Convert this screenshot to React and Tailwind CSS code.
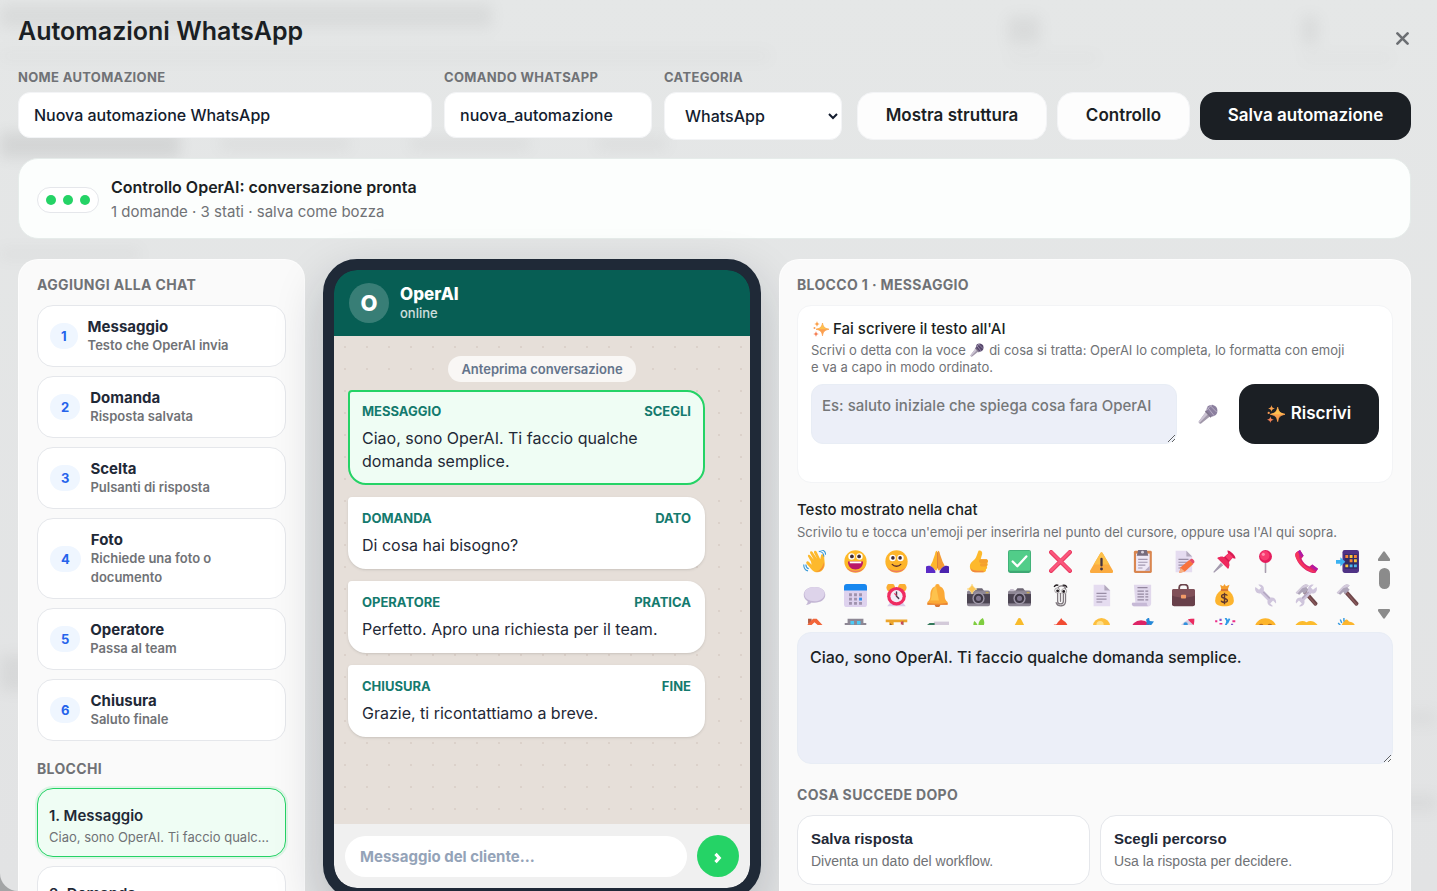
import { useState } from 'react';

const blockTypes = [
  { id: 1, title: 'Messaggio', text: 'Testo che OperAI invia' },
  { id: 2, title: 'Domanda', text: 'Risposta salvata' },
  { id: 3, title: 'Scelta', text: 'Pulsanti di risposta' },
  { id: 4, title: 'Foto', text: 'Richiede una foto o documento' },
  { id: 5, title: 'Operatore', text: 'Passa al team' },
  { id: 6, title: 'Chiusura', text: 'Saluto finale' },
];

const blocks = [
  { id: 1, type: 'Messaggio', tag: 'Scegli', text: 'Ciao, sono OperAI. Ti faccio qualche domanda semplice.' },
  { id: 2, type: 'Domanda', tag: 'Dato', text: 'Di cosa hai bisogno?' },
  { id: 3, type: 'Operatore', tag: 'Pratica', text: 'Perfetto. Apro una richiesta per il team.' },
  { id: 4, type: 'Chiusura', tag: 'Fine', text: 'Grazie, ti ricontattiamo a breve.' },
];

const nextSteps = [
  { title: 'Salva risposta', text: 'Diventa un dato del workflow.' },
  { title: 'Scegli percorso', text: 'Usa la risposta per decidere.' },
];

// Emoji drawings, all on a 32x32 grid
const sparklesArt = (
  <>
    <path d="M19 4c1.500 8 4 10.500 13 12.500-9 2-11.500 4.500-13 13-1.500-8.500-4-11-13-13C15 14.500 17.500 12 19 4z" fill="#fb9f4f" stroke="#fb9f4f" strokeWidth="1.500" strokeLinejoin="round" />
    <path d="M19 4c1.500 8 4 10.500 13 12.500H6C15 14.500 17.500 12 19 4z" fill="#fdc04f" />
    <path d="M8 0c.7 4 2 5.300 6 6-4 .7-5.300 2-6 6-.7-4-2-5.300-6-6 4-.7 5.300-2 6-6z" fill="#fba24e" />
    <path d="M6 20c.7 4 2 5.300 6 6-4 .7-5.300 2-6 6-.7-4-2-5.300-6-6 4-.7 5.300-2 6-6z" fill="#f58258" />
    <circle cx="3" cy="14" r="2" fill="#f99c55" />
  </>
);

const micArt = (head) => (
  <>
    <path d="M13 12l7 7L5 31c-2 1.500-5-1.500-3.500-3.500z" fill="#a299ab" />
    <path d="M13 12l3.500 3.500L2.500 30c-1.500-.5-2-1.500-1-2.500z" fill="#cdc5d4" />
    <path d="M14 7c0-8 18-8 17 4 0 6-5 9-10 9l-8-8z" fill={head} />
    <path d="M15 5l11 14M14 10l4-5 5-4M19 2l11 11" fill="none" stroke="#c2b8cd" strokeWidth="1.300" />
    <path d="M12 11l9 10" stroke="#80758c" strokeWidth="2.500" />
  </>
);

const pageArt = (
  <>
    <path d="M5 1h15l8 8v22H5z" fill="#e5dcf0" />
    <path d="M20 1l8 8h-8z" fill="#b3a9bd" />
    <path d="M9 13h14M9 17h14M9 21h14M9 25h8" stroke="#998da5" strokeWidth="1.600" />
  </>
);

const cameraArt = (
  <>
    <path d="M10 10l3-4h8l3 4z" fill="#6d6673" />
    <rect x="0" y="9" width="32" height="22" rx="2.500" fill="#8d8694" />
    <path d="M0 14h32v13H0z" fill="#4b4452" />
    <rect x="3" y="7" width="5" height="3" fill="#c7bfce" />
    <rect x="26" y="11" width="4" height="2" fill="#c2a657" />
    <circle cx="16" cy="20" r="8.500" fill="#9d96a6" />
    <circle cx="16" cy="20" r="6.500" fill="#3e3845" />
    <circle cx="16" cy="20" r="3.500" fill="#81778f" />
  </>
);

const wrenchArt = (
  <>
    <path d="M2 4l5 4 3-3-4-4c5-1 9 3 7.500 8L23 19c5-1.500 9 3 7.500 8l-4-4-4 4 4 4c-5 1-9-3-7.500-8L9 13C4 14.500 0 9 2 4z" fill="#cfc5dc" />
    <path d="M13 11l9 9" stroke="#b3a7c1" strokeWidth="2" />
  </>
);

const hammerArt = (
  <>
    <path d="M11 12l4-4 16 18c1.500 2-2 5.500-4 4z" fill="#6d4549" />
    <path d="M13 10l16 19" stroke="#8f5d5e" strokeWidth="1.500" />
    <path d="M1 12L10 3c3-3 7-3 9-1l-3 3 3 3-6 6-3-3-4 4z" fill="#ada4b8" />
    <path d="M1 12L10 3c3-3 7-3 9-1l-3 2-6 2-7 8z" fill="#d3cadc" />
  </>
);

const emojis = [
  {
    name: 'Saluto',
    art: (
      <>
        <path d="M10 16L6 9c-1-2 1.500-3.500 3-1.500l5 6-5-9C8 2 11 .5 12.500 3l6 9-4-8c-1-2.500 2-4 3.500-1.500L23 13l1-5c.5-3 4.500-2.500 4.500 1 0 7 2 11-.5 16-3 7-12 8-17 2L4 19c-1.500-2 1-4.500 3-2.500l4 4z" transform="translate(1 0)" fill="#fdb92c" />
        <path d="M29 17c1 9-4 14-12 13 7-1 10-5 12-13z" fill="#f2873c" />
        <path d="M22 2c4 0 7 3 7 7M24-.5c5 .5 7.500 3 7.500 7M1 20c0 5 2 8 6 9M4 20c0 3 1 5 4 6" fill="none" stroke="#3b9bd8" strokeWidth="1.600" />
      </>
    ),
  },
  {
    name: 'Sorriso aperto',
    art: (
      <>
        <circle cx="16" cy="16" r="15.500" fill="#fdb927" />
        <path d="M3 24c5 9 20 10 26 0-3 3-7 5-13 5S6 27 3 24z" fill="#ed7a62" />
        <circle cx="10.500" cy="9" r="4.500" fill="#fff" />
        <circle cx="21.500" cy="9" r="4.500" fill="#fff" />
        <circle cx="11" cy="9" r="2.600" fill="#402a32" />
        <circle cx="21" cy="9" r="2.600" fill="#402a32" />
        <path d="M5.500 16h21c0 7-4 11-10.500 11S5.500 23 5.500 16z" fill="#ba1768" />
        <path d="M8 16h16v2.500H8z" fill="#fff" />
      </>
    ),
  },
  {
    name: 'Sorriso',
    art: (
      <>
        <circle cx="16" cy="16" r="15.500" fill="#fdb52b" />
        <path d="M3 24c5 9 20 10 26 0-3 3-7 5-13 5S6 27 3 24z" fill="#ed7a62" />
        <circle cx="10.500" cy="11" r="4.500" fill="#fff" />
        <circle cx="21.500" cy="11" r="4.500" fill="#fff" />
        <circle cx="11" cy="11" r="2.500" fill="#402a32" />
        <circle cx="21" cy="11" r="2.500" fill="#402a32" />
        <path d="M10 20c3 3.500 9 3.500 12 0" fill="none" stroke="#5b2f2c" strokeWidth="1.800" strokeLinecap="round" />
      </>
    ),
  },
  {
    name: 'Grazie',
    art: (
      <>
        <path d="M15.500 1c-2 0-2.500 2-3 5L9 16l-3 6 8 7 2-3z" fill="#fdb52c" />
        <path d="M16.500 1c2 0 2.500 2 3 5L23 16l3 6-8 7-2-3z" fill="#f49b35" />
        <path d="M16 3v22" stroke="#d9772f" strokeWidth="1.200" />
        <path d="M0 23c5-3 11 1 13 7v2H0z" fill="#5b2bc6" />
        <path d="M32 23c-5-3-11 1-13 7v2h13z" fill="#4b23ae" />
      </>
    ),
  },
  {
    name: 'Pollice in su',
    art: (
      <>
        <path d="M16 1c3-1 6 1 5 5l-2 7h7c3 0 4 3 2 5 1.500 1.500 1 3.500-.5 4.500 1 2 .5 3.500-1.200 4.200.7 2-.6 4.300-3.300 4.300H12c-5 0-8-3-8-8 0-7 7-8 9-14z" fill="#fdb92c" />
        <path d="M19 13h7c3 0 4 3 2 5h-9c-3 0-3-5 0-5zM20 18.500h7.500c1 2 .5 3.500-1 4.500H20c-2.500 0-2.500-4.500 0-4.500z" fill="#f5a02f" />
        <path d="M5 25c3 4 9 4 18 4v2H12c-4 0-6-2-7-6z" fill="#f08740" />
      </>
    ),
  },
  {
    name: 'Fatto',
    art: (
      <>
        <rect x="0" y="0" width="32" height="32" rx="3" fill="#3da873" />
        <rect x="1" y="1" width="30" height="28" rx="2" fill="#51cd89" />
        <path d="M6.500 16l6.500 6.500L25.500 9" fill="none" stroke="#fff" strokeWidth="3.200" strokeLinecap="round" strokeLinejoin="round" />
      </>
    ),
  },
  {
    name: 'Errore',
    art: (
      <>
        <path d="M3 3l26 26M29 3L3 29" stroke="#e8395f" strokeWidth="6" strokeLinecap="round" />
        <path d="M3 2.500l26 26M29 2.500L3 28.500" stroke="#fb567c" strokeWidth="3.600" strokeLinecap="round" />
      </>
    ),
  },
  {
    name: 'Attenzione',
    art: (
      <>
        <path d="M14.500 4c.7-1.300 2.300-1.300 3 0L32 29c.5 1.500 0 3-1.500 3h-29C0 32-.5 30.500 0 29z" fill="#fbab40" />
        <path d="M14.500 4c.7-1.300 2.300-1.300 3 0L27 20H5z" fill="#fdc04a" />
        <path d="M16 12.500v9" stroke="#443341" strokeWidth="3.200" strokeLinecap="round" />
        <circle cx="16" cy="26.500" r="2" fill="#443341" />
      </>
    ),
  },
  {
    name: 'Appunti',
    art: (
      <>
        <rect x="4" y="1" width="25" height="31" rx="2" fill="#d98650" />
        <path d="M7 5h19v24H7z" fill="#efe8f6" />
        <path d="M26 22l-7 7h7z" fill="#b9adc6" />
        <path d="M10 0h12l2 8H8z" fill="#776b7d" />
        <circle cx="16" cy="3" r="2" fill="#d9d1de" />
        <path d="M10 13h13M10 17h13M10 21h10M10 25h6" stroke="#a397b0" strokeWidth="1.500" />
      </>
    ),
  },
  {
    name: 'Nota',
    art: (
      <>
        {pageArt}
        <path d="M12 24l12-10 6 5-12 11-8 2z" fill="#f8733d" />
        <path d="M24 14l3-2c2 0 5 3 4 5l-2 2z" fill="#e54c6b" />
        <path d="M10 32l2-7 6 5z" fill="#f6b185" />
      </>
    ),
  },
  {
    name: 'Puntina',
    art: (
      <>
        <path d="M1 31l10-12 2 2z" stroke="#a49aae" strokeWidth="1.500" fill="#a49aae" />
        <path d="M6 11c4-2 7-2 9-1l6-5-1-4c2-2 13 8 11 11l-4-1-5 6c1 3 1 6-1 9z" fill="#d91a52" />
        <path d="M17 9l5-5 6 6-5 5z" fill="#f8396b" />
        <path d="M6 11c4-2 7-2 9-1l7 7c1 3 1 6-1 9z" fill="#ee295e" />
      </>
    ),
  },
  {
    name: 'Posizione',
    art: (
      <>
        <path d="M16 16v15" stroke="#a79dae" strokeWidth="2.200" strokeLinecap="round" />
        <circle cx="16" cy="9" r="9" fill="#e41c5c" />
        <circle cx="15" cy="8" r="6.500" fill="#f83b70" />
        <circle cx="13" cy="6" r="2.200" fill="#ff8dac" />
      </>
    ),
  },
  {
    name: 'Telefono',
    art: (
      <>
        <path d="M2 3l5-3 5 8-3 4c2 5 6 9 11 11l4-3 8 6-3 5c-2 2-6 1-10-1C11 26 4 19 1 10 0 7 0 5 2 3z" fill="#d71f72" />
        <path d="M2 3l3-2 1 10c3 7 8 12 15 15l8 5c-2 1-6 0-10-2C11 25 4 18 1 10 0 7 0 5 2 3z" fill="#f5365c" />
        <path d="M7 0l5 8-3 2-5-8zM24 20l8 6-2 3-8-6z" fill="#b119a5" />
      </>
    ),
  },
  {
    name: 'Chiamata',
    art: (
      <>
        <rect x="9" y="0" width="23" height="32" rx="3" fill="#4f3285" />
        <path d="M12 6h18v20H12z" fill="#302b63" />
        <path d="M13 7h4v4h-4zM19 13h4v4h-4zM25 7h4v4h-4z" fill="#fb8437" />
        <path d="M19 7h4v4h-4zM25 13h4v4h-4zM13 20h4v4h-4z" fill="#fcc63d" />
        <path d="M19 20h4v4h-4zM25 20h4v4h-4z" fill="#4eb5ee" />
        <path d="M0 14h6v-4l7 6.500L6 23v-4H0z" fill="#3bb2f2" />
      </>
    ),
  },
  {
    name: 'Fumetto',
    art: (
      <>
        <path d="M16 4c9 0 15 4.500 15 11s-6 11-15 11c-1 0-3 0-4-.3C10 28 7 29 4 29c2-1.500 2.500-3 2.500-5C3 22 1 19 1 15 1 8.500 7 4 16 4z" fill="#c3b6d4" />
        <path d="M16 4c9 0 14 4 14 9.500S24 24 16 24 2 20 2 14 7 4 16 4z" fill="#ddd3ea" />
      </>
    ),
  },
  {
    name: 'Calendario',
    art: (
      <>
        <rect x="0" y="0" width="32" height="32" rx="4" fill="#ded2ee" />
        <path d="M4 0h24c2.500 0 4 1.500 4 4v5H0V4c0-2.500 1.500-4 4-4z" fill="#1787ef" />
        <path d="M7 13h4v4H7zM14 13h4v4h-4zM21 13h4v4h-4zM7 19h4v4H7zM14 19h4v4h-4zM7 25h4v4H7zM14 25h4v4h-4zM21 25h4v4h-4z" fill="#9f92ad" />
        <path d="M21 19h4v4h-4z" fill="#2e8fed" />
      </>
    ),
  },
  {
    name: 'Sveglia',
    art: (
      <>
        <path d="M3 31l5-6h16l5 6z" fill="#dacce8" />
        <circle cx="8" cy="5" r="6" fill="#fbad32" />
        <circle cx="24" cy="5" r="6" fill="#fbad32" />
        <circle cx="16" cy="17" r="13" fill="#ef2b61" />
        <circle cx="16" cy="17" r="8.500" fill="#f3ecf7" />
        <path d="M16 11v6l3 3" fill="none" stroke="#4b3b50" strokeWidth="2" strokeLinecap="round" />
        <path d="M16 16l-3-3" stroke="#ef2b61" strokeWidth="1.500" />
      </>
    ),
  },
  {
    name: 'Campana',
    art: (
      <>
        <circle cx="16" cy="28" r="4" fill="#d77534" />
        <path d="M16 0c2 0 3 1 3 3 6 2 7 8 7 14 0 4 2 6 4 8v4H2v-4c2-2 4-4 4-8 0-6 1-12 7-14 0-2 1-3 3-3z" fill="#fba936" />
        <path d="M14 3c-7 3-5 15-8 20h12z" fill="#fdc24d" />
        <path d="M2 26c8 2 20 2 28 0v3H2z" fill="#e78036" />
      </>
    ),
  },
  {
    name: 'Flash',
    art: (
      <>
        {cameraArt}
        <path d="M7 0c1.500 4 3 5.500 7 7-4 1.500-5.500 3-7 7-1.500-4-3-5.500-7-7 4-1.500 5.500-3 7-7z" fill="#fcc554" stroke="#fbe3a0" strokeWidth="1" />
      </>
    ),
  },
  { name: 'Fotocamera', art: cameraArt },
  {
    name: 'Graffetta',
    art: (
      <>
        <path d="M20 10v14c0 5-8 5-8 0V8c0-7 11-7 11 0v16c0 8-11 8-13 2" fill="none" stroke="#80797f" strokeWidth="1.800" strokeLinecap="round" />
        <path d="M16 13v11" stroke="#80797f" strokeWidth="1.800" strokeLinecap="round" />
        <circle cx="11.500" cy="9" r="3.500" fill="#fff" stroke="#8d878c" />
        <circle cx="21" cy="10" r="3.500" fill="#fff" stroke="#8d878c" />
        <circle cx="12" cy="9.500" r="2" fill="#201a1e" />
        <circle cx="20.500" cy="10.500" r="2" fill="#201a1e" />
        <path d="M7 4c2-3 4-3 6-2M19 2c2-1 5 0 6 3" fill="none" stroke="#201a1e" strokeWidth="1.800" />
      </>
    ),
  },
  { name: 'Documento', art: pageArt },
  {
    name: 'Ricevuta',
    art: (
      <>
        <path d="M4 1h24v26c0 3-2 4-4 4H5c-3 0-5-3-3-5h4z" fill="#e1d8ec" />
        <path d="M2 26h20c0 3 1 5 3 5H5c-3 0-5-3-3-5z" fill="#c6b9d6" />
        <path d="M9 5h14M9 10h9M20 10h4M9 14h9M20 14h4M9 18h9M20 18h4M9 22h9M20 22h4" stroke="#94879f" strokeWidth="1.700" />
      </>
    ),
  },
  {
    name: 'Valigetta',
    art: (
      <>
        <path d="M10 8V5c0-3 1-4 4-4h4c3 0 4 1 4 4v3" fill="none" stroke="#6b454c" strokeWidth="2.500" />
        <rect x="0" y="7" width="32" height="24" rx="3" fill="#68404a" />
        <path d="M0 10c0-2 1-3 3-3h26c2 0 3 1 3 3v6c-9 4-23 4-32 0z" fill="#805058" />
        <rect x="12.500" y="15" width="7" height="5" rx="1" fill="#f29b68" />
      </>
    ),
  },
  {
    name: 'Soldi',
    art: (
      <>
        <path d="M10 1l4 2 2-3 2 3 5-2-3 8h-8z" fill="#f49c2b" />
        <path d="M12 8h8c6 4 9 9 9 15 0 6-5 8-13 8S3 29 3 23c0-6 3-11 9-15z" fill="#fdb42e" />
        <path d="M11 7h10v3H11z" fill="#d97831" />
        <path d="M20 16c-1-2-8-2.500-8 1 0 4 8 2 8 6 0 3.500-8 3-8.500 0M16 12v16" fill="none" stroke="#5f372e" strokeWidth="2" />
      </>
    ),
  },
  { name: 'Chiave inglese', art: wrenchArt },
  {
    name: 'Attrezzi',
    art: (
      <>
        {hammerArt}
        <g transform="translate(32 0) scale(-1 1)">{wrenchArt}</g>
      </>
    ),
  },
  { name: 'Martello', art: hammerArt },
  {
    name: 'Casa',
    art: (
      <>
        <path d="M5 13h22v18H5z" fill="#f2d6c3" />
        <path d="M7 1h5v7H7z" fill="#b35c44" />
        <path d="M19 1l13 14-3 2L16 6 4 17l-3-2L14 1z" fill="#f2653a" />
        <path d="M13 19h6v12h-6z" fill="#8c5447" />
      </>
    ),
  },
  {
    name: 'Ufficio',
    art: (
      <>
        <path d="M5 1h22v30H5zM1 7h4v24H1zM27 7h4v24h-4z" fill="#8d8794" />
        <path d="M9 4h5v5H9zM18 4h5v5h-5zM9 12h5v5H9zM18 12h5v5h-5z" fill="#4ccaf5" />
        <path d="M12 22h8v9h-8z" fill="#5b5462" />
      </>
    ),
  },
  {
    name: 'Gru',
    art: (
      <>
        <path d="M1 2h30v4H1zM6 4h6v27H6z" fill="#eca52c" />
        <path d="M7 8l4 4-4 4 4 4-4 4" fill="none" stroke="#8b542d" strokeWidth="1.500" />
        <path d="M25 5v12" stroke="#8b542d" strokeWidth="1.500" />
        <path d="M22 5h3v4h-3z" fill="#c8475d" />
      </>
    ),
  },
  {
    name: 'Camion',
    art: (
      <>
        <path d="M11 5h21v20H11z" fill="#d3cad9" />
        <path d="M1 10l4-3h7v18H1z" fill="#34795b" />
        <circle cx="8" cy="26" r="4" fill="#493f4e" />
        <circle cx="25" cy="26" r="4" fill="#493f4e" />
      </>
    ),
  },
  {
    name: 'Germoglio',
    art: (
      <>
        <path d="M16 31V10" stroke="#4ea43c" strokeWidth="3" />
        <path d="M15 17C8 15 8 8 10 4c4 3 7 8 5 13zM17 16C14 8 17 3 22 0c4 7 2 13-5 16z" fill="#7fcd3f" />
      </>
    ),
  },
  {
    name: 'Fulmine',
    art: <path d="M16 0c2 0 2 2 3 3l4 8 4 3-13 17 3-13H5l8-15c1-2 1-3 3-3z" fill="#f8bb2b" />,
  },
  {
    name: 'Fuoco',
    art: (
      <>
        <path d="M17 0c2 5 8 4 9 12 3 9-2 19-10 19S3 23 6 10c2-2 3 0 5-2 2-4 4-4 6-8z" fill="#f14b32" />
        <path d="M16 13c3 4 6 6 5 11-1 6-9 6-10 0 0-4 3-6 5-11z" fill="#fbb136" />
      </>
    ),
  },
  {
    name: 'Idea',
    art: (
      <>
        <circle cx="16" cy="12" r="12" fill="#fdbf3d" />
        <circle cx="14" cy="9" r="5" fill="#ffe08c" />
        <path d="M11 23h10v8H11z" fill="#9a919f" />
      </>
    ),
  },
  {
    name: 'Obiettivo',
    art: (
      <>
        <circle cx="14" cy="17" r="14" fill="#dd2466" />
        <circle cx="14" cy="20" r="9" fill="#f7edf5" />
        <circle cx="14" cy="20" r="5" fill="#dd2466" />
        <path d="M14 17L22 8l-1-6 4-3 1 5 6 1-4 5-5-1z" fill="#2689d8" />
      </>
    ),
  },
  {
    name: 'Razzo',
    art: (
      <>
        <path d="M31 1c1 9-5 17-15 23l-8-8C14 6 22 0 31 1z" fill="#d8cee1" />
        <path d="M22 2c3-1 6-1 9-1 0 3 0 6-1 9z" fill="#ec2b5f" />
        <path d="M8 13l-6 4 7 2zM19 23l-4 7-3-8z" fill="#7b4ac0" />
        <circle cx="19" cy="9" r="3" fill="#3192dd" />
      </>
    ),
  },
  {
    name: 'Festa',
    art: (
      <>
        <path d="M10 11l11 11L1 31z" fill="#fbb131" />
        <path d="M3 3h3v3H3zM27 3h4v3h-4zM9 7h4v2H9z" fill="#ed2f88" />
        <path d="M17 0c4 3 3 7 0 11M23 1l-3 6" fill="none" stroke="#2e9be7" strokeWidth="2.500" />
        <path d="M9 1h3v3H9zM25 8h3v2h-3z" fill="#8254cc" />
      </>
    ),
  },
  {
    name: 'Felice',
    art: (
      <>
        <circle cx="16" cy="16" r="15.500" fill="#fdb52b" />
        <path d="M7 12c1-4 5-4 6 0M19 12c1-4 5-4 6 0" fill="none" stroke="#b56a27" strokeWidth="2" />
      </>
    ),
  },
  {
    name: 'Accordo',
    art: <path d="M1 9c5-5 10-6 15-3 5-3 10-2 15 3v11c-8 8-22 8-30 0z" fill="#fcbb2d" />,
  },
  {
    name: 'Applauso',
    art: (
      <>
        <path d="M10 6c3-5 6-5 8-1l4 1c5 2 6 8 6 14 0 10-12 14-18 6L5 15z" fill="#fcb52d" />
        <path d="M3 7l3 3M6 2l2 5M11 0v5" stroke="#389ce0" strokeWidth="2" />
      </>
    ),
  },
];

function EmojiArt({ className, children }) {
  return (
    <svg viewBox="0 0 32 32" className={className} aria-hidden="true">
      {children}
    </svg>
  );
}

// Dimmed page that stays visible behind the editor
function PageBehind() {
  return (
    <div aria-hidden="true" className="absolute inset-0 overflow-hidden rounded-bl-[18px] bg-linear-to-b from-[#e5e7e7] to-[#e2e3e4]">
      <div className="absolute inset-0 opacity-20 blur-[7px]">
        <div className="absolute left-0 top-1 h-6 w-[492px] rounded bg-neutral-500/50"></div>
        <div className="absolute left-0 top-[50px] h-3 w-[770px] bg-neutral-500/20"></div>
        <div className="absolute left-0 top-[132px] h-[26px] w-[180px] bg-neutral-700/50"></div>
        <div className="absolute left-[220px] top-[138px] h-3 w-[130px] bg-neutral-500/40"></div>
        <div className="absolute left-[410px] top-[138px] h-3 w-[120px] bg-neutral-500/40"></div>
        <div className="absolute left-[597px] top-[138px] h-3 w-[70px] bg-neutral-500/40"></div>
        <div className="absolute left-[1008px] top-4 h-7 w-8 bg-neutral-500/50"></div>
        <div className="absolute left-[1008px] top-[54px] h-2 w-[90px] bg-neutral-500/20"></div>
        <div className="absolute left-[1302px] top-4 h-7 w-4 bg-neutral-500/50"></div>
        <div className="absolute left-[1302px] top-[54px] h-2 w-[90px] bg-neutral-500/20"></div>
        <div className="absolute left-0 top-[248px] h-3 w-[140px] bg-neutral-500/30"></div>
        <div className="absolute left-0 top-[655px] h-9 w-8 bg-neutral-500/50"></div>
        <div className="absolute right-0 top-[710px] h-4 w-8 bg-neutral-500/30"></div>
        <div className="absolute right-0 top-[795px] h-4 w-10 bg-neutral-500/40"></div>
      </div>
    </div>
  );
}

function SectionTitle({ children }) {
  return <h2 className="text-sm leading-5 font-bold tracking-wide text-[#707276] uppercase">{children}</h2>;
}

function App() {
  const [selected, setSelected] = useState(1);
  const [text, setText] = useState(blocks[0].text);

  const selectBlock = (block) => {
    setSelected(block.id);
    setText(block.text);
  };

  const current = blocks.find((block) => block.id === selected);

  return (
    <div className="relative h-screen overflow-hidden bg-[#a3a5a6] font-[Inter,sans-serif] text-[#1b1f24]">
      <PageBehind />

      <main className="relative pt-4 pr-[26px] pl-[18px]">
        <header className="flex items-start justify-between">
          <h1 className="text-[25px] leading-[30px] font-semibold">Automazioni WhatsApp</h1>
          <button type="button" aria-label="Chiudi" className="mt-3.5 flex h-4 w-[18px] items-center justify-center text-[#6b6e72]">
            <svg viewBox="0 0 12 12" className="h-[13px] w-[13px]" fill="none" stroke="currentColor" strokeWidth="2.400" strokeLinecap="round">
              <path d="M1.300 1.300l9.400 9.400M10.700 1.300l-9.400 9.400" />
            </svg>
          </button>
        </header>

        {/* Automation settings */}
        <div className="mt-[22px] flex items-end gap-[15px]">
          <div className="grid flex-1 grid-cols-[1fr_208px_178px] gap-3">
            <label className="block">
              <span className="block text-[13px] leading-[18px] font-bold tracking-wide text-[#707276] uppercase">Nome automazione</span>
              <input
                type="text"
                defaultValue="Nuova automazione WhatsApp"
                className="mt-1.5 h-[46px] w-full rounded-xl border border-gray-100 bg-white px-[15px] text-base font-medium text-[#131c2e]"
              />
            </label>
            <label className="block">
              <span className="block text-[13px] leading-[18px] font-bold tracking-wide text-[#707276] uppercase">Comando WhatsApp</span>
              <input
                type="text"
                defaultValue="nuova_automazione"
                className="mt-1.5 h-[46px] w-full rounded-xl border border-gray-100 bg-white px-[15px] text-base font-medium text-[#131c2e]"
              />
            </label>
            <label className="block">
              <span className="block text-[13px] leading-[18px] font-bold tracking-wide text-[#707276] uppercase">Categoria</span>
              <select className="mt-1.5 h-12 w-full rounded-xl border border-gray-100 bg-white px-4 text-base font-medium text-[#131c2e]">
                <option>WhatsApp</option>
              </select>
            </label>
          </div>
          <div className="flex items-center gap-2.5">
            <button type="button" className="h-12 w-[190px] rounded-2xl border border-gray-100 bg-[#fdfdfd] text-[17px] font-semibold">
              Mostra struttura
            </button>
            <button type="button" className="h-12 w-[133px] rounded-2xl border border-gray-100 bg-[#fdfdfd] text-[17px] font-semibold">
              Controllo
            </button>
            <button type="button" className="h-12 w-[211px] rounded-2xl bg-[#1b1f24] text-[17px] font-semibold text-white">
              Salva automazione
            </button>
          </div>
        </div>

        {/* Status bar */}
        <section className="mt-[18px] flex items-center gap-3 rounded-[20px] border border-[#e6ecea] bg-[#fcfefd] px-[18px] pt-4 pb-3.5">
          <div className="flex h-[26px] w-[62px] items-center justify-center gap-[7px] rounded-full border border-gray-200 bg-white">
            <span className="h-2.5 w-2.5 rounded-full bg-[#25d366]"></span>
            <span className="h-2.5 w-2.5 rounded-full bg-[#25d366]"></span>
            <span className="h-2.5 w-2.5 rounded-full bg-[#25d366]"></span>
          </div>
          <div>
            <p className="text-base leading-[25px] font-semibold">Controllo OperAI: conversazione pronta</p>
            <p className="text-[15px] leading-6 text-[#707276]">1 domande · 3 stati · salva come bozza</p>
          </div>
        </section>

        <div className="mt-5 grid grid-cols-[287px_438fr_632fr] items-start gap-[18px]">
          {/* Palette and block list */}
          <aside className="rounded-[20px] border border-white/60 bg-[#fafafa] px-[18px] pt-[15px] pb-6">
            <SectionTitle>Aggiungi alla chat</SectionTitle>
            <div className="mt-2.5 flex flex-col gap-[9px]">
              {blockTypes.map((type) => (
                <button
                  key={type.id}
                  type="button"
                  className="flex items-center gap-2.5 rounded-2xl border border-gray-200 bg-white px-3 py-[11px] text-left"
                >
                  <span className="rounded-full bg-[#eff6ff] px-[11px] py-1 text-[13px] leading-[18px] font-bold text-[#2563eb]">
                    {type.id}
                  </span>
                  <span className="pr-6">
                    <span className="block text-[15px] leading-[19px] font-bold text-[#1f2937]">{type.title}</span>
                    <span className="block text-[13px] leading-[19px] font-semibold text-[#707276]">{type.text}</span>
                  </span>
                </button>
              ))}
            </div>
            <div className="mt-[18px]">
              <SectionTitle>Blocchi</SectionTitle>
            </div>
            <div className="mt-[9px] flex flex-col gap-[9px]">
              {blocks.map((block) => (
                <button
                  key={block.id}
                  type="button"
                  onClick={() => selectBlock(block)}
                  className={
                    block.id === selected
                      ? 'rounded-2xl border border-[#25d366] bg-[#effdf4] px-[11px] pt-4 pb-2 text-left shadow-[0_0_0_2px_rgba(37,211,102,0.12)]'
                      : 'rounded-2xl border border-gray-200 bg-white px-[11px] pt-4 pb-2 text-left'
                  }
                >
                  <span className="block text-[15px] leading-[22px] font-semibold text-[#1f2937]">
                    {block.id}. {block.type}
                  </span>
                  <span className="block truncate text-[13px] leading-[21px] text-[#707276]">{block.text}</span>
                </button>
              ))}
            </div>
          </aside>

          {/* Phone preview */}
          <section className="overflow-hidden rounded-[34px] border-[11px] border-[#1f2937] bg-[#1f2937] shadow-[0_18px_50px_rgba(15,23,42,0.2)]">
            <div className="overflow-hidden rounded-[23px]">
              <div className="flex items-center gap-[11px] bg-[#075e54] px-[15px] py-[13px] text-white">
                <div className="flex h-10 w-10 items-center justify-center rounded-full bg-white/20 text-[22px] font-extrabold">O</div>
                <div>
                  <p className="text-[17px] leading-5 font-extrabold">OperAI</p>
                  <p className="text-[13px] leading-[19px] font-medium text-white/80">online</p>
                </div>
              </div>
              <div className="flex min-h-[488px] flex-col bg-[#e6dfd9] bg-[radial-gradient(circle,rgba(120,90,70,0.1)_1px,transparent_1px)] bg-[size:22px_22px] px-3.5 pt-5">
                <span className="self-center rounded-full bg-[#f9f7f5] px-[13px] py-1 text-[13px] leading-[18px] font-semibold text-[#64748b]">
                  Anteprima conversazione
                </span>
                <div className="mt-2 flex flex-col gap-3">
                  {blocks.map((block) => (
                    <button
                      key={block.id}
                      type="button"
                      onClick={() => selectBlock(block)}
                      className={
                        block.id === selected
                          ? 'w-[92%] rounded-[18px] rounded-tl-[4px] border-2 border-[#25d366] bg-[#effdf4] px-3 py-2.5 text-left'
                          : 'w-[92%] rounded-[18px] rounded-tl-[4px] border-2 border-white bg-white px-3 py-2.5 text-left shadow-sm'
                      }
                    >
                      <span className="flex justify-between text-[13px] leading-[18px] font-bold text-[#147a6e] uppercase">
                        <span>{block.type}</span>
                        <span>{block.tag}</span>
                      </span>
                      <span className="mt-[7px] block text-base leading-[23px] text-[#1f2937]">{block.text}</span>
                    </button>
                  ))}
                </div>
              </div>
              <div className="flex items-center gap-2.5 bg-[#f0f0f0] px-[11px] py-[11px]">
                <input
                  type="text"
                  aria-label="Messaggio del cliente"
                  placeholder="Messaggio del cliente..."
                  className="h-[41px] min-w-0 flex-1 rounded-full bg-white px-[15px] text-[15px] font-bold placeholder:text-[#94a3b8]"
                />
                <button type="button" aria-label="Invia" className="flex h-[42px] w-[42px] items-center justify-center rounded-full bg-[#25d366] text-white">
                  <svg viewBox="0 0 12 14" className="mt-1 h-3 w-2.5" fill="none" stroke="currentColor" strokeWidth="3.800">
                    <path d="M3 2l4.500 5L3 12" />
                  </svg>
                </button>
              </div>
            </div>
          </section>

          {/* Block editor */}
          <section className="rounded-[20px] border border-white/60 bg-[#fafafa] px-[17px] pt-[15px] pb-6">
            <SectionTitle>
              Blocco {current.id} · {current.type}
            </SectionTitle>

            <div className="mt-2.5 rounded-[14px] border border-gray-100 bg-white px-[13px] pt-3 pb-[38px]">
              <p className="flex items-center gap-1 text-[15px] leading-[22px] font-medium">
                <EmojiArt className="ml-0.5 h-4 w-4">{sparklesArt}</EmojiArt>
                Fai scrivere il testo all'AI
              </p>
              <p className="mt-0.5 pr-8 text-[13px] leading-[17px] text-[#707276]">
                Scrivi o detta con la voce <EmojiArt className="mr-0.5 inline h-3.5 w-3.5 align-[-2px]">{micArt('#55456b')}</EmojiArt> di cosa si tratta:
                OperAI lo completa, lo formatta con emoji e va a capo in modo ordinato.
              </p>
              <div className="mt-2 flex gap-2.5">
                <textarea
                  aria-label="Richiesta per l'AI"
                  placeholder="Es: saluto iniziale che spiega cosa fara OperAI"
                  className="h-[60px] min-w-0 flex-1 rounded-xl border border-[#e8edf5] bg-[#eceff8] px-2.5 py-2.5 text-[15px] leading-[22px] font-medium placeholder:text-[#757779]"
                />
                <button type="button" aria-label="Detta con la voce" className="flex w-[42px] items-center justify-center">
                  <EmojiArt className="h-5 w-5">{micArt('#8b7f9e')}</EmojiArt>
                </button>
                <button type="button" className="flex w-[140px] items-center justify-center gap-1.5 rounded-2xl bg-[#1b1f24] text-[17px] font-semibold text-white">
                  <EmojiArt className="h-[18px] w-[18px]">{sparklesArt}</EmojiArt>
                  Riscrivi
                </button>
              </div>
            </div>

            <label htmlFor="chat-text" className="mt-4 block text-[15px] leading-[22px] font-medium">
              Testo mostrato nella chat
            </label>
            <p className="mt-0.5 text-[13px] leading-[18px] text-[#707276]">
              Scrivilo tu e tocca un'emoji per inserirla nel punto del cursore, oppure usa l'AI qui sopra.
            </p>
            <div className="mt-1 flex h-20 gap-2.5 overflow-hidden">
              <div className="grid flex-1 auto-rows-[29px] grid-cols-14 gap-[5px] pt-0.5">
                {emojis.map((emoji) => (
                  <button key={emoji.name} type="button" aria-label={emoji.name} className="flex items-center justify-center">
                    <EmojiArt className="h-[23px] w-[23px]">{emoji.art}</EmojiArt>
                  </button>
                ))}
              </div>
              <div className="flex w-[18px] flex-col items-center py-1.5 text-[#8b8b8b]">
                <svg viewBox="0 0 12 10" className="h-2.5 w-3" fill="currentColor">
                  <path d="M5 1c.5-1 1.500-1 2 0l5 7c.5 1 0 2-1 2H1C0 10-.5 9 0 8z" />
                </svg>
                <div className="mt-[7px] h-[21px] w-[11px] rounded-full bg-[#8b8b8b]"></div>
                <svg viewBox="0 0 12 10" className="mt-auto h-2.5 w-3" fill="currentColor">
                  <path d="M5 9c.5 1 1.500 1 2 0l5-7c.5-1 0-2-1-2H1C0 0-.5 1 0 2z" />
                </svg>
              </div>
            </div>
            <textarea
              id="chat-text"
              value={text}
              onChange={(e) => setText(e.target.value)}
              className="mt-[7px] block h-[132px] w-full rounded-[14px] border border-[#e8edf5] bg-[#eceff8] px-3 py-3 text-base leading-[25px] font-medium"
            />

            <div className="mt-[21px]">
              <SectionTitle>Cosa succede dopo</SectionTitle>
            </div>
            <div className="mt-2.5 grid grid-cols-2 gap-2.5">
              {nextSteps.map((step) => (
                <button
                  key={step.title}
                  type="button"
                  className="rounded-2xl border border-gray-200 bg-white px-[13px] py-3 text-left font-['Liberation_Sans',Arial,sans-serif]"
                >
                  <span className="block text-[15px] leading-[22px] font-bold text-[#1f2937]">{step.title}</span>
                  <span className="block text-sm leading-[22px] text-[#707276]">{step.text}</span>
                </button>
              ))}
            </div>
          </section>
        </div>
      </main>
    </div>
  );
}

export default App;
